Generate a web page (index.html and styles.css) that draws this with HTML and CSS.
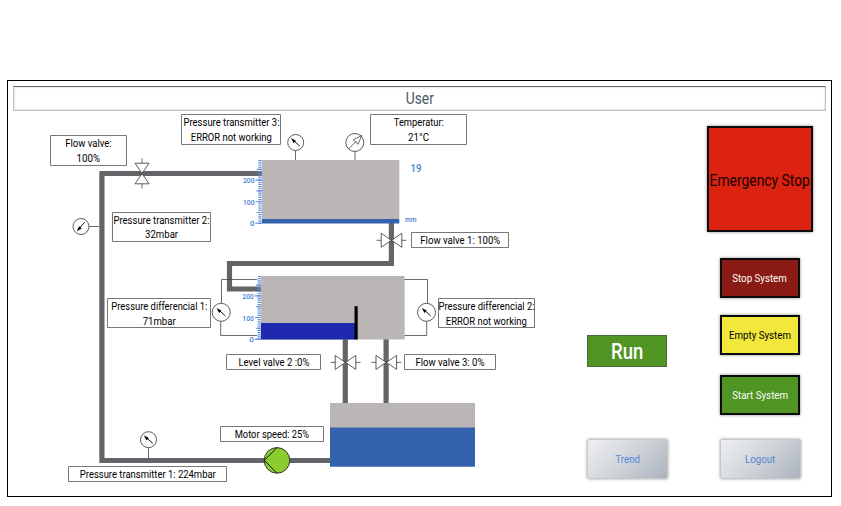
FILE: index.html
```
<!DOCTYPE html>
<html lang="en">
<head>
<meta charset="utf-8">
<title>User</title>
<link rel="stylesheet" href="styles.css">
</head>
<body>
<main class="panel">
  <header class="title"><span class="narrow">User</span></header>
  <div class="content">
    <svg class="process" viewBox="8 111 552 385" width="552" height="385">
      <defs>
        <g id="needle"><path d="M4.2 3.7L-2 -2" class="line strong"/><path d="M-4.7 -4.4L.2 -1.8L-2 .8Z"/></g>
        <g id="gauge"><circle r="8" class="outline"/><use href="#needle"/></g>
        <g id="gauge-large"><circle r="9" class="outline"/><use href="#needle"/></g>
        <g id="valve"><path class="outline" d="M-10.3 -7V7L10.3 -7V7Z"/><path class="line" d="M-15 0H-10.3M10.3 0H15"/></g>
      </defs>

      <g class="pipe">
        <path d="M262 173.5H101.900V460.500H330"/>
        <path d="M391.400 223V263.500H229.500V289H261"/>
        <path d="M345.300 339V404M386.100 339V404"/>
      </g>

      <path class="gas" d="M262 160H399.300V219H262Z"/>
      <path class="water" d="M262 219H399.300V223.500H262Z"/>
      <path class="gas" d="M261 276H404.700V339.500H261Z"/>
      <path class="deep" d="M261 323H355V339.500H261Z"/>
      <path d="M354.500 306.200H357.700V339.500H354.500Z"/>
      <path class="gas" d="M330 403H475V428H330Z"/>
      <path class="water" d="M330 427.500H475V466.700H330Z"/>

      <g class="scale">
        <path class="minor" d="M260 223.900V160"/>
        <path d="M255.500 223.300H262M255.500 201.700H262M255.500 180.100H262M256.500 212.500H262M256.500 190.900H262M256.500 169.300H262"/>
        <path class="minor" d="M259.200 339.700V276"/>
        <path d="M255 339.100H261M255 317.500H261M255 295.900H261M256 328.300H261M256 306.700H261M256 285.100H261"/>
      </g>
      <g class="ticks">
        <text x="254.500" y="226.400">0</text><text x="254.500" y="205" textLength="11.500" lengthAdjust="spacingAndGlyphs">100</text><text x="254.500" y="183.400" textLength="11.500" lengthAdjust="spacingAndGlyphs">200</text>
        <text x="253.800" y="342.400">0</text><text x="253.800" y="321" textLength="11.500" lengthAdjust="spacingAndGlyphs">100</text><text x="253.800" y="299.400" textLength="11.500" lengthAdjust="spacingAndGlyphs">200</text>
        <text x="416.500" y="221.800" textLength="11.500" lengthAdjust="spacingAndGlyphs">mm</text>
      </g>
      <text class="level" x="410.500" y="171.700" textLength="11" lengthAdjust="spacingAndGlyphs">19</text>

      <path class="line" d="M89 226.500H99M295.500 150.500V160M355 151.500V160M148.500 447.700V458"/>
      <path class="line" d="M257 279.500H221.500V303.300M220.700 321.300V335.500H257M404.700 279.500H427.500V303.300M426.700 321.300V335.500H404.700"/>
      <use href="#gauge" transform="translate(81 226.500) rotate(270)"/>
      <use href="#gauge" x="295.700" y="142.500"/>
      <use href="#gauge" x="148.500" y="439.700"/>
      <use href="#gauge-large" x="221.200" y="312.300"/>
      <use href="#gauge-large" x="426.500" y="312.300"/>
      <circle class="outline" cx="354.800" cy="142.500" r="9"/>
      <path class="line" d="M348.500 149L356.500 141M361.800 135.500L353.300 139.700L358 144.300Z"/>

      <use href="#valve" transform="translate(142 173.500) rotate(90)"/>
      <use href="#valve" x="391.500" y="240.300"/>
      <use href="#valve" x="345.500" y="362.400"/>
      <use href="#valve" x="386.300" y="362.400"/>

      <circle class="pump" cx="277" cy="460.400" r="12.800"/>
      <path class="line strong" d="M277 447.600L264.300 460.400L277 473.200"/>

      <g class="box">
        <path d="M50.500 135.500H126.500V165.500H50.500Z"/>
        <path d="M181.500 114.500H280.500V144.500H181.500Z"/>
        <path d="M370.500 114.500H466.500V144.500H370.500Z"/>
        <path d="M112.500 212.500H210.500V241.500H112.500Z"/>
        <path d="M411.500 232.500H508.500V247.500H411.500Z"/>
        <path d="M107.500 298.500H210.500V327.500H107.500Z"/>
        <path d="M438.500 298.500H534.500V327.500H438.500Z"/>
        <path d="M226.500 354.500H320.500V369.500H226.500Z"/>
        <path d="M404.500 354.500H495.500V369.500H404.500Z"/>
        <path d="M220.500 426.500H323.500V441.500H220.500Z"/>
        <path d="M68.500 466.500H226.500V481.500H68.500Z"/>
      </g>
      <g class="label" transform="translate(.3 0)">
        <text x="88.100" y="147.300" textLength="46.500" lengthAdjust="spacingAndGlyphs">Flow valve:</text>
        <text x="88" y="161.500" textLength="23.500" lengthAdjust="spacingAndGlyphs">100%</text>
        <text x="231.200" y="126" textLength="96" lengthAdjust="spacingAndGlyphs">Pressure transmitter 3:</text>
        <text x="231" y="140.500" textLength="81" lengthAdjust="spacingAndGlyphs">ERROR not working</text>
        <text x="418.500" y="126" textLength="50" lengthAdjust="spacingAndGlyphs">Temperatur:</text>
        <text x="418.300" y="140.500" textLength="21" lengthAdjust="spacingAndGlyphs">21°C</text>
        <text x="161.200" y="223.900" textLength="96" lengthAdjust="spacingAndGlyphs">Pressure transmitter 2:</text>
        <text x="161.300" y="238.400" textLength="33" lengthAdjust="spacingAndGlyphs">32mbar</text>
        <text x="460" y="244.300" textLength="80" lengthAdjust="spacingAndGlyphs">Flow valve 1: 100%</text>
        <text x="159" y="310" textLength="96" lengthAdjust="spacingAndGlyphs">Pressure differencial 1:</text>
        <text x="158.900" y="324.500" textLength="33" lengthAdjust="spacingAndGlyphs">71mbar</text>
        <text x="486.200" y="310" textLength="96" lengthAdjust="spacingAndGlyphs">Pressure differencial 2:</text>
        <text x="486" y="324.500" textLength="81" lengthAdjust="spacingAndGlyphs">ERROR not working</text>
        <text x="273.600" y="366.200" textLength="71" lengthAdjust="spacingAndGlyphs">Level valve 2 :0%</text>
        <text x="449.600" y="366.200" textLength="69" lengthAdjust="spacingAndGlyphs">Flow valve 3: 0%</text>
        <text x="271.600" y="438.200" textLength="74.500" lengthAdjust="spacingAndGlyphs">Motor speed: 25%</text>
        <text x="147.500" y="478.300" textLength="136" lengthAdjust="spacingAndGlyphs">Pressure transmitter 1: 224mbar</text>
      </g>
    </svg>

    <section class="status">
      <div class="run"><span class="narrow">Run</span></div>
      <button class="nav"><span class="narrow">Trend</span></button>
    </section>
    <section class="controls">
      <button class="control emergency"><span class="narrow">Emergency Stop</span></button>
      <button class="control stop"><span class="narrow">Stop System</span></button>
      <button class="control empty"><span class="narrow">Empty System</span></button>
      <button class="control start"><span class="narrow">Start System</span></button>
      <button class="nav"><span class="narrow">Logout</span></button>
    </section>
  </div>
</main>
</body>
</html>
```
FILE: styles.css
```
* { box-sizing: border-box; }
body {
  margin: 0;
  padding: 80px 0 0 7px;
  background: #fff;
  font-family: Roboto, "Liberation Sans", sans-serif;
  overflow: hidden;
}
.panel {
  width: 825px;
  height: 417px;
  padding: 5px;
  border: 1px solid #000;
}
.title {
  display: flex;
  align-items: center;
  justify-content: center;
  width: 813px;
  height: 25px;
  border: 1px solid #c4c4c4;
  border-top-color: #66676a;
  box-shadow: inset 0 0 2px #bbb;
  color: #4c5768;
  font-size: 16.5px;
}
.narrow {
  display: inline-block;
  white-space: nowrap;
  transform: scaleX(.84);
}
.content {
  display: flex;
  margin-left: -5px;
}
.process { display: block; flex: none; }
.pipe { fill: none; stroke: #646569; stroke-width: 5.2; }
.gas { fill: #bab6b5; }
.water { fill: #3562af; }
.deep { fill: #1f29af; }
.outline { fill: #fff; fill-opacity: .9; stroke: #333; stroke-width: .8; }
.line { fill: none; stroke: #444; stroke-width: .8; }
.strong { stroke: #111; stroke-width: 1; }
.scale { fill: none; stroke: #5b8fdd; stroke-width: 1.1; }
.scale .minor { stroke-width: 3.2; stroke-dasharray: 1.2 .96; }
.ticks { fill: #4a80d4; font-size: 8px; font-weight: 500; text-anchor: end; }
.level { fill: #5585d4; font-size: 11.8px; font-weight: 600; }
.pump { fill: #8ccc2e; stroke: #333; }
.box { fill: #fff; stroke: #777; stroke-width: 1; }
.label { fill: #000; font-size: 11.8px; text-anchor: middle; }
.status {
  display: flex;
  flex-direction: column;
  width: 82px;
  margin-left: 27px;
  padding-top: 224px;
}
.run {
  display: flex;
  align-items: center;
  justify-content: center;
  width: 80px;
  height: 32px;
  border: 1px solid #4b6b3c;
  background: #509523;
  color: #fff;
  font-size: 22px;
  font-weight: 500;
}
.status .nav { margin: 72px 0 0 0; }
.controls {
  display: flex;
  flex-direction: column;
  align-items: center;
  width: 106px;
  margin-left: 38px;
  padding-top: 15px;
}
button {
  display: flex;
  align-items: center;
  justify-content: center;
  flex: none;
  padding: 0;
  font-family: inherit;
  font-size: 11.6px;
}
.control {
  width: 80px;
  height: 40px;
  border: 2px solid #0b0b0b;
  color: #fff;
  box-shadow: 0 0 3px #888;
}
.emergency {
  width: 106px;
  height: 106px;
  background: #dc2210;
  color: #160000;
  font-size: 16.5px;
}
.emergency .narrow { margin: 2px -12px 0; }
.stop { margin-top: 26px; background: #8a1a14; }
.empty { margin-top: 17px; background: #f1e83b; color: #000; }
.start { margin-top: 20px; background: #509523; }
.nav {
  width: 81px;
  height: 40px;
  border: 1px solid #c5c8cb;
  border-radius: 2px;
  background: linear-gradient(135deg, #eeeff1, #d0d4d9 50%, #abb3bd);
  box-shadow: 0 0 3px #999;
  color: #5585d8;
}
.controls .nav { margin-top: 24px; }
```
